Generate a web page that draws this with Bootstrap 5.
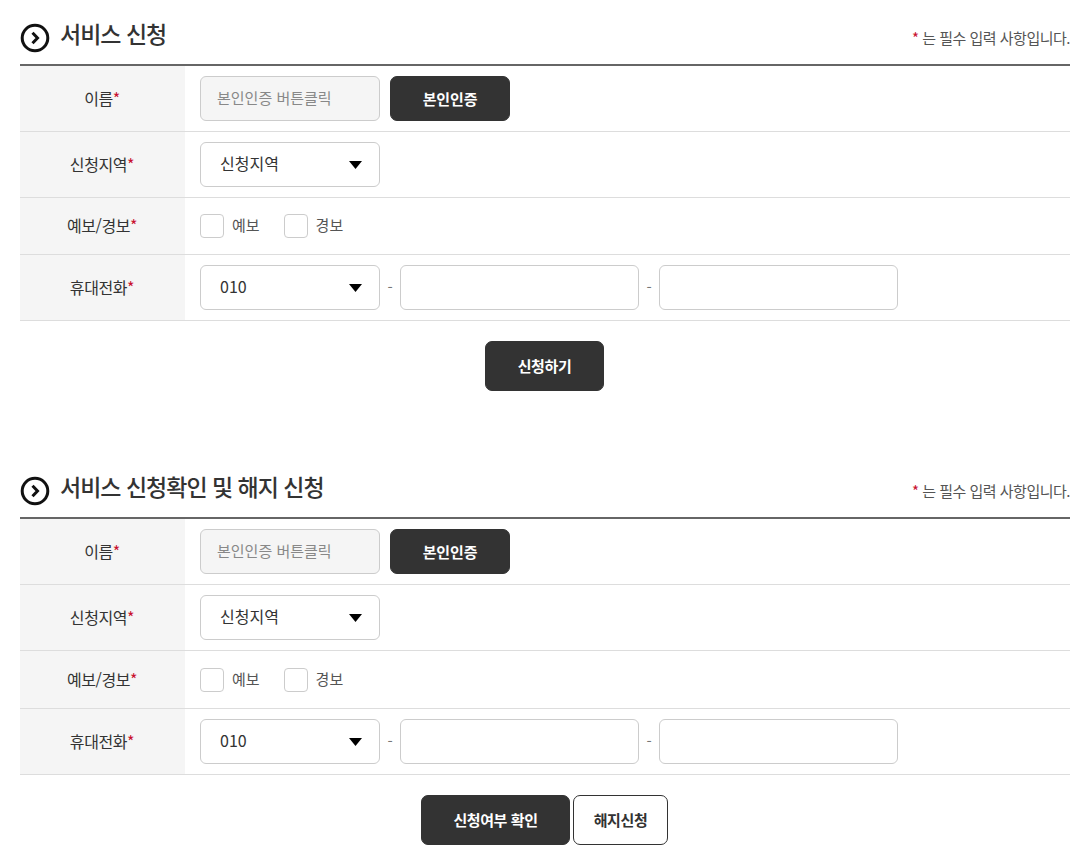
<!DOCTYPE html>
<html lang="ko">
<head>
<meta charset="utf-8">
<title>서비스 신청</title>
<link href="https://cdn.jsdelivr.net/npm/bootstrap@5.3.0/dist/css/bootstrap.min.css" rel="stylesheet">
<style>
body{font-family:"Noto Sans CJK KR","Noto Sans",sans-serif;color:#333;background:#fff;font-size:16px;letter-spacing:-.4px;}
.page-wrap{padding:0 20px;}
.sec-head{height:66px;border-bottom:2px solid #666;}
.sec-two{margin-top:62px;height:66px;}
.title-box{padding-top:6px;gap:10px;}
.sec-title{font-size:23px;font-weight:500;line-height:30px;margin:0 0 5px;color:#333;letter-spacing:-1px;}
.sec-ico{width:30px;height:30px;flex:none;margin-top:6px;}
.sec-note{font-size:15px;color:#555;line-height:20px;letter-spacing:-.5px;padding-top:12px;}
.req{color:#c8102e;}
.frow{border-bottom:1px solid #ddd;}
.h-a{height:66px;}
.h-b{height:57px;}
.h-c{height:58px;}
.flabel{width:165px;flex:none;background:#f5f5f5;font-size:16px;color:#333;padding:0 1px 2px 0;}
.fbody{padding-left:15px;}
.fld{width:180px;height:45px;border:1px solid #ccc;border-radius:6px;font-size:16px;color:#333;flex:none;padding:0 0 3px 19px;letter-spacing:0;}
.fld-ro.form-control:disabled{background:#f5f5f5;padding-left:16px;color:#888;opacity:1;font-size:15px;}
.fld-ro.form-control::placeholder{color:#888;}
.fld.form-select{background-image:none;}
.sel-wrap{position:relative;width:180px;flex:none;}
.sel-arrow{position:absolute;right:18px;top:19px;width:13px;height:8px;pointer-events:none;}
.fld-tel{width:239px;padding:0 12px;}
.tel-sep{width:20px;text-align:center;color:#777;font-size:15px;padding-bottom:1px;}
.btn-dark-s{background:#333;color:#fff;border:1px solid #333;border-radius:7px;font-size:15px;font-weight:700;height:45px;width:120px;margin-left:10px;padding:2px 0 0;letter-spacing:-.15px;}
.btn-dark-s:hover{background:#333;color:#fff;}
.chk.form-check-input{width:24px;height:24px;margin:0;border:1px solid #ccc;border-radius:4px;float:none;}
.chk-text{font-size:15px;color:#555;margin-left:8px;margin-right:24px;letter-spacing:0;margin-top:-1px;}
.act-row{padding:20px 1px 0 0;gap:3px;}
.btn-act{height:50px;border-radius:7px;font-size:15px;font-weight:700;padding:0;letter-spacing:-.4px;}
.btn-fill{background:#333;color:#fff;border:1px solid #333;}
.btn-fill:hover{background:#333;color:#fff;}
.btn-line{background:#fff;color:#333;border:1px solid #333;}
.w-apply{width:119px;}
.w-check{width:149px;}
.w-cancel{width:95px;}
</style>
</head>
<body>
<div class="page-wrap">

<div class="sec-head d-flex justify-content-between align-items-center">
  <div class="title-box d-flex align-items-center">
    <svg class="sec-ico" viewBox="0 0 30 30"><circle cx="15" cy="15" r="12.8" fill="none" stroke="#111" stroke-width="3"/><path d="M12.5 9.8 17.5 15l-5 5.2" fill="none" stroke="#111" stroke-width="3"/></svg>
    <h2 class="sec-title">서비스 신청</h2>
  </div>
  <div class="sec-note"><span class="req">*</span> 는 필수 입력 사항입니다.</div>
</div>
<div class="frow h-a d-flex">
  <div class="flabel d-flex align-items-center justify-content-center"><span>이름<span class="req">*</span></span></div>
  <div class="fbody d-flex align-items-center">
    <input class="form-control fld fld-ro" type="text" placeholder="본인인증 버튼클릭" disabled>
    <button class="btn btn-dark-s" type="button">본인인증</button>
  </div>
</div>
<div class="frow h-a d-flex">
  <div class="flabel d-flex align-items-center justify-content-center"><span>신청지역<span class="req">*</span></span></div>
  <div class="fbody d-flex align-items-center">
    <div class="sel-wrap">
      <select class="form-select fld"><option>신청지역</option></select>
      <svg class="sel-arrow" viewBox="0 0 13 8"><path d="M0 0h13L6.5 8z" fill="#000"/></svg>
    </div>
  </div>
</div>
<div class="frow h-b d-flex">
  <div class="flabel d-flex align-items-center justify-content-center"><span>예보/경보<span class="req">*</span></span></div>
  <div class="fbody d-flex align-items-center">
    <input class="form-check-input chk" type="checkbox" id="a1"><label class="chk-text" for="a1">예보</label>
    <input class="form-check-input chk" type="checkbox" id="a2"><label class="chk-text" for="a2">경보</label>
  </div>
</div>
<div class="frow h-a d-flex">
  <div class="flabel d-flex align-items-center justify-content-center"><span>휴대전화<span class="req">*</span></span></div>
  <div class="fbody d-flex align-items-center">
    <div class="sel-wrap">
      <select class="form-select fld"><option>010</option></select>
      <svg class="sel-arrow" viewBox="0 0 13 8"><path d="M0 0h13L6.5 8z" fill="#000"/></svg>
    </div>
    <span class="tel-sep">-</span>
    <input class="form-control fld fld-tel" type="text">
    <span class="tel-sep">-</span>
    <input class="form-control fld fld-tel" type="text">
  </div>
</div>
<div class="act-row d-flex justify-content-center">
  <button class="btn btn-act btn-fill w-apply" type="button">신청하기</button>
</div>

<div class="sec-head sec-two d-flex justify-content-between align-items-center">
  <div class="title-box d-flex align-items-center">
    <svg class="sec-ico" viewBox="0 0 30 30"><circle cx="15" cy="15" r="12.8" fill="none" stroke="#111" stroke-width="3"/><path d="M12.5 9.8 17.5 15l-5 5.2" fill="none" stroke="#111" stroke-width="3"/></svg>
    <h2 class="sec-title">서비스 신청확인 및 해지 신청</h2>
  </div>
  <div class="sec-note"><span class="req">*</span> 는 필수 입력 사항입니다.</div>
</div>
<div class="frow h-a d-flex">
  <div class="flabel d-flex align-items-center justify-content-center"><span>이름<span class="req">*</span></span></div>
  <div class="fbody d-flex align-items-center">
    <input class="form-control fld fld-ro" type="text" placeholder="본인인증 버튼클릭" disabled>
    <button class="btn btn-dark-s" type="button">본인인증</button>
  </div>
</div>
<div class="frow h-a d-flex">
  <div class="flabel d-flex align-items-center justify-content-center"><span>신청지역<span class="req">*</span></span></div>
  <div class="fbody d-flex align-items-center">
    <div class="sel-wrap">
      <select class="form-select fld"><option>신청지역</option></select>
      <svg class="sel-arrow" viewBox="0 0 13 8"><path d="M0 0h13L6.5 8z" fill="#000"/></svg>
    </div>
  </div>
</div>
<div class="frow h-c d-flex">
  <div class="flabel d-flex align-items-center justify-content-center"><span>예보/경보<span class="req">*</span></span></div>
  <div class="fbody d-flex align-items-center">
    <input class="form-check-input chk" type="checkbox" id="b1"><label class="chk-text" for="b1">예보</label>
    <input class="form-check-input chk" type="checkbox" id="b2"><label class="chk-text" for="b2">경보</label>
  </div>
</div>
<div class="frow h-a d-flex">
  <div class="flabel d-flex align-items-center justify-content-center"><span>휴대전화<span class="req">*</span></span></div>
  <div class="fbody d-flex align-items-center">
    <div class="sel-wrap">
      <select class="form-select fld"><option>010</option></select>
      <svg class="sel-arrow" viewBox="0 0 13 8"><path d="M0 0h13L6.5 8z" fill="#000"/></svg>
    </div>
    <span class="tel-sep">-</span>
    <input class="form-control fld fld-tel" type="text">
    <span class="tel-sep">-</span>
    <input class="form-control fld fld-tel" type="text">
  </div>
</div>
<div class="act-row d-flex justify-content-center">
  <button class="btn btn-act btn-fill w-check" type="button">신청여부 확인</button>
  <button class="btn btn-act btn-line w-cancel" type="button">해지신청</button>
</div>

</div>
<script src="https://cdn.jsdelivr.net/npm/bootstrap@5.3.0/dist/js/bootstrap.bundle.min.js"></script>
</body>
</html>
